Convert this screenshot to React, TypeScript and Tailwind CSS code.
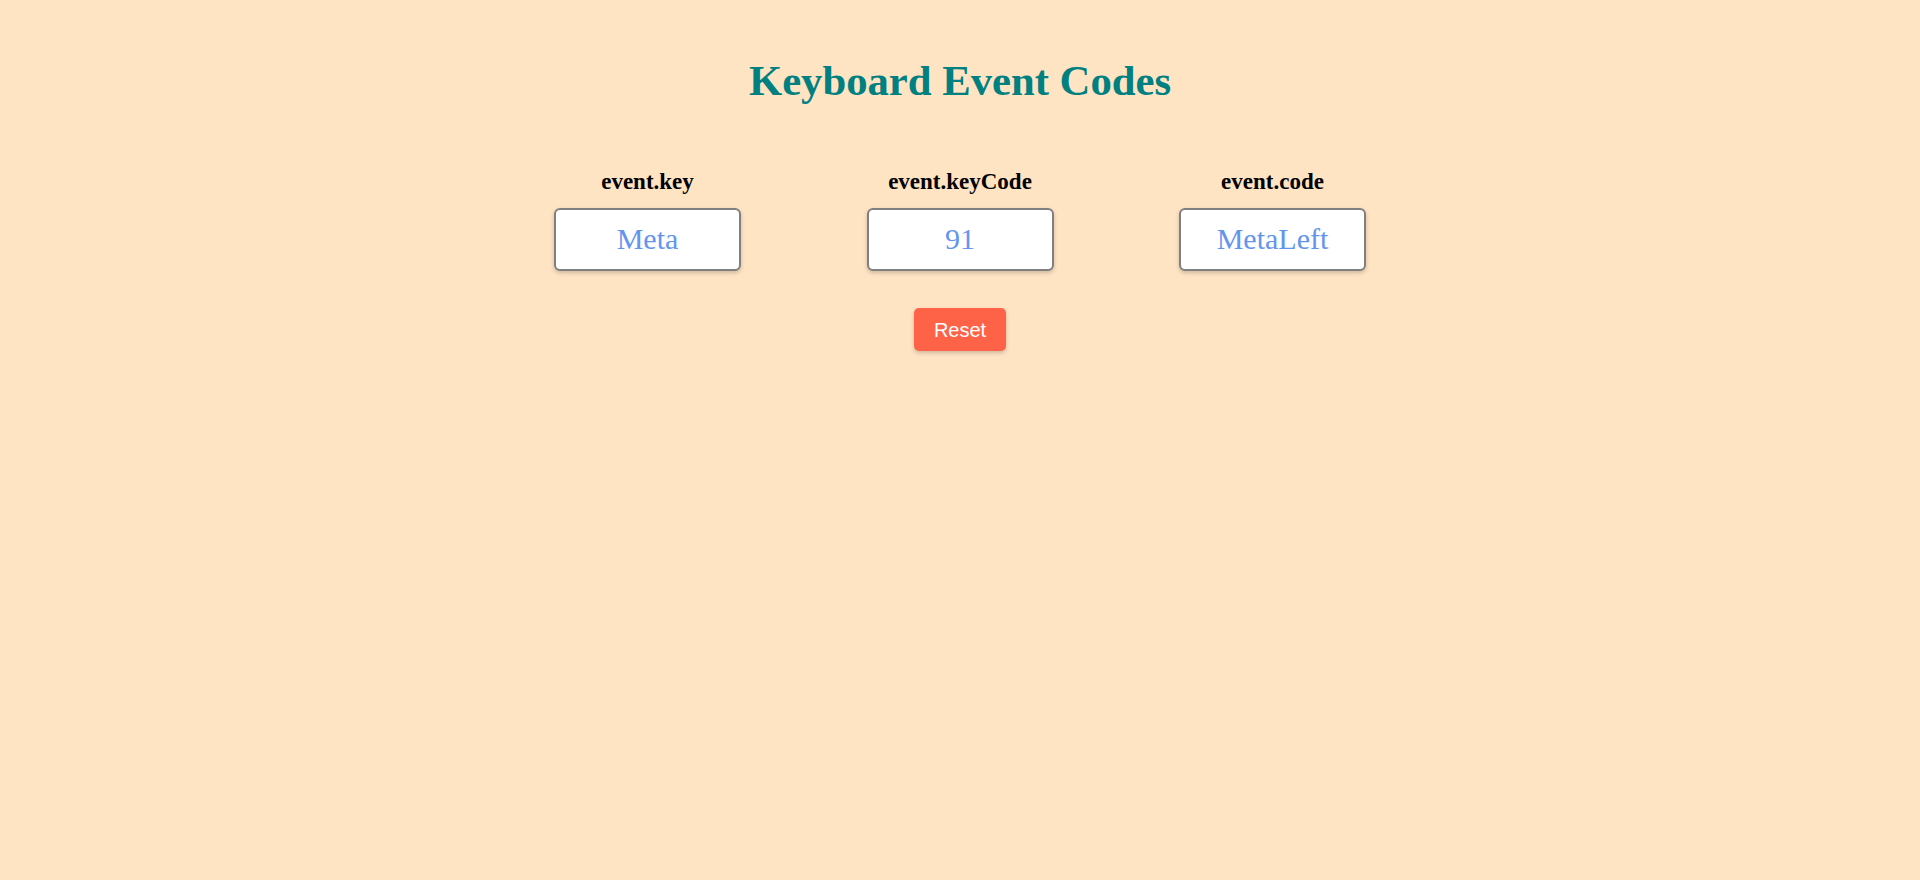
import React from "react";

const cols = [
  { label: "event.key", value: "Meta" },
  { label: "event.keyCode", value: "91" },
  { label: "event.code", value: "MetaLeft" },
];

export default function App() {
  return (
    <div className="min-h-[880px] w-full bg-[#ffe4c4] flex flex-col items-center font-['Liberation_Serif','Times_New_Roman',serif]">
      <h1 className="mt-[57px] text-[42.7px] leading-[48px] font-bold text-[#008080]">
        Keyboard Event Codes
      </h1>
      <div className="mt-[64px] flex gap-[125.5px]">
        {cols.map((c) => (
          <div key={c.label} className="w-[187px] flex flex-col items-center">
            <div className="text-[23px] leading-[26px] font-bold text-black">{c.label}</div>
            <div className="mt-[13px] w-[187px] h-[63px] bg-white border-2 border-[#808080] rounded-[6px] shadow-[0_2px_4px_rgba(0,0,0,0.2)] flex items-center justify-center text-[30px] text-[#6495ed] pb-[2px]">
              {c.value}
            </div>
          </div>
        ))}
      </div>
      <button className="mt-[37px] w-[92px] h-[43px] bg-[#ff6347] text-white rounded-[5px] shadow-[0_2px_4px_rgba(0,0,0,0.2)] text-[20px] font-['Liberation_Sans',Arial,sans-serif]">
        Reset
      </button>
    </div>
  );
}
